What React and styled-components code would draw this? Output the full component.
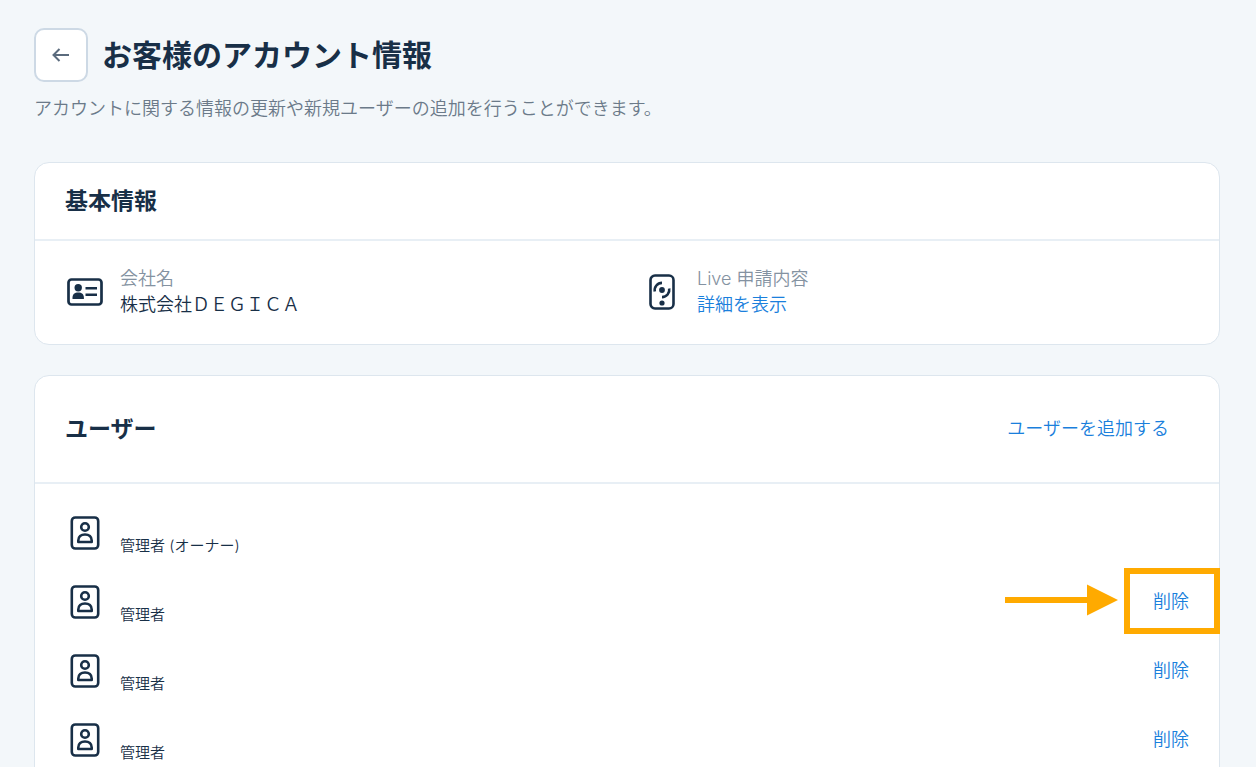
import React from 'react'
import styled, { createGlobalStyle } from 'styled-components';

const GlobalStyle = createGlobalStyle`
  * {
    box-sizing: border-box;
  }
  body {
    margin: 0;
    background-color: #f3f7fa;
    color: #182f47;
    font-family: Inter, "Noto Sans CJK JP", sans-serif;
    font-size: 18px;
    font-weight: 350;
    line-height: 26px;
  }
`;
const Page = styled.main`
  height: 100vh;
  overflow: hidden;
  padding: 28px 36px 0 34px;
`;
const TitleBar = styled.header`
  display: flex;
  align-items: center;
  gap: 14px;
`;
const BackButton = styled.button`
  display: flex;
  align-items: center;
  justify-content: center;
  width: 54px;
  height: 54px;
  padding: 0;
  border: 2px solid #cdd9e5;
  border-radius: 10px;
  background-color: white;
  color: #5b6b7d;
  cursor: pointer;
`;
const Title = styled.h1`
  margin: 0;
  font-size: 30px;
  line-height: 40px;
  font-weight: 700;
`;
const Description = styled.p`
  margin: 14px 0 40px;
  color: #6b7a89;
`;
const Card = styled.section`
  margin-bottom: 30px;
  border: 1px solid #dde6ee;
  border-radius: 15px;
  background-color: white;
`;
const CardHeader = styled.div`
  display: flex;
  align-items: center;
  justify-content: space-between;
  padding: ${props => props.$tall ? '40px 50px 40px 30px' : '25px 30px'};
  border-bottom: 2px solid #e8eff5;
`;
const CardTitle = styled.h2`
  margin: 0;
  font-size: 23px;
  line-height: 26px;
  font-weight: 700;
`;
const InfoGrid = styled.div`
  display: grid;
  grid-template-columns: 1fr 1fr;
  gap: 30px;
  padding: 25px 30px 26px;
`;
const InfoItem = styled.div`
  display: flex;
  align-items: center;
  gap: 15px;
`;
const IconBox = styled.span`
  display: flex;
  align-items: center;
  justify-content: center;
  width: 40px;
  height: 40px;
`;
const Label = styled.div`
  color: #8492a1;
`;
const Value = styled.div`
  color: #182f47;
`;
const TextLink = styled.a`
  color: #1a7fdc;
  text-decoration: none;
`;
const UserList = styled.ul`
  margin: 0;
  padding: 14px 30px;
  list-style: none;
`;
const UserRow = styled.li`
  position: relative;
  display: flex;
  align-items: center;
  gap: 15px;
  height: 69px;
`;
const UserText = styled.div`
  flex: 1;
`;
const UserName = styled.div`
  height: 26px;
`;
const UserRole = styled.div`
  font-size: 15px;
  line-height: 22px;
`;
const DeleteButton = styled.button`
  padding: 0;
  border: 0;
  background: none;
  color: #1a7fdc;
  font: inherit;
  cursor: pointer;
`;
const Highlight = styled.span`
  position: absolute;
  top: 1px;
  right: -31px;
  width: 96px;
  height: 66px;
  border: 6px solid #ffaa00;
  pointer-events: none;
`;
const Pointer = styled.svg`
  position: absolute;
  top: 17px;
  right: 71px;
  pointer-events: none;
`;

const ArrowLeft = () => (
  <svg width="18" height="14" viewBox="0 0 18 14" fill="none" stroke="currentColor" strokeWidth="2" aria-hidden="true">
    <path d="M17 7H2M7.5 1L1.5 7l6 6" />
  </svg>
)

const IdCardIcon = () => (
  <svg width="36" height="28" viewBox="0 0 36 28" fill="#182f47" aria-hidden="true">
    <rect x="1.5" y="1.5" width="33" height="25" rx="3" fill="none" stroke="#182f47" strokeWidth="2.7" />
    <circle cx="11.2" cy="9.8" r="3.7" />
    <path d="M5.500 21v-1.300c0-3.500 2.100-5.200 5.700-5.200s5.700 1.700 5.700 5.200V21z" />
    <path d="M18.500 9h11.500v2.600H18.500zM18.500 15.500h11.500v2.600H18.500z" />
  </svg>
)

const LiveIcon = () => (
  <svg width="26" height="36" viewBox="0 0 26 36" fill="none" stroke="#182f47" strokeWidth="2.600" aria-hidden="true">
    <rect x="1.500" y="1.500" width="23" height="33" rx="4.500" />
    <circle cx="13" cy="16" r="2.900" fill="#182f47" stroke="none" />
    <circle cx="13" cy="29" r="2.600" fill="#182f47" stroke="none" />
    <path d="M5.800 17.500a7.300 7.300 0 0 1 7.200-8.600M20.200 14.500a7.300 7.300 0 0 1-7.200 8.600" />
  </svg>
)

const UserIcon = () => (
  <svg width="30" height="34" viewBox="0 0 30 34" fill="none" stroke="#182f47" strokeWidth="2.600" aria-hidden="true">
    <rect x="1.800" y="1.500" width="26.400" height="31" rx="3.500" />
    <circle cx="15" cy="11" r="3.800" />
    <path d="M8.300 26v-1.500c0-3.800 2.700-6 6.700-6s6.700 2.200 6.700 6V26z" strokeLinejoin="round" />
  </svg>
)

const users = [
  { id: 1, role: '管理者 (オーナー)', owner: true },
  { id: 2, role: '管理者', highlighted: true },
  { id: 3, role: '管理者' },
  { id: 4, role: '管理者' },
]

const User = ({user}) => {
  return (
    <UserRow>
      <IconBox><UserIcon /></IconBox>
      <UserText>
        <UserName />
        <UserRole>{user.role}</UserRole>
      </UserText>
      {!user.owner && <DeleteButton type="button">削除</DeleteButton>}
      {user.highlighted && (
        <>
          <Pointer width="113" height="32" viewBox="0 0 113 32" fill="#ffaa00" aria-hidden="true">
            <path d="M0 13h82V0.500L113 16L82 31.500V19H0z" />
          </Pointer>
          <Highlight />
        </>
      )}
    </UserRow>
  )
}

export default function App() {
  return (
    <>
      <GlobalStyle />
      <Page>
        <TitleBar>
          <BackButton type="button" aria-labelledby="page-title"><ArrowLeft /></BackButton>
          <Title id="page-title">お客様のアカウント情報</Title>
        </TitleBar>
        <Description>アカウントに関する情報の更新や新規ユーザーの追加を行うことができます。</Description>

        <Card>
          <CardHeader>
            <CardTitle>基本情報</CardTitle>
          </CardHeader>
          <InfoGrid>
            <InfoItem>
              <IconBox><IdCardIcon /></IconBox>
              <div>
                <Label>会社名</Label>
                <Value>株式会社ＤＥＧＩＣＡ</Value>
              </div>
            </InfoItem>
            <InfoItem>
              <IconBox><LiveIcon /></IconBox>
              <div>
                <Label>Live 申請内容</Label>
                <TextLink href="#live">詳細を表示</TextLink>
              </div>
            </InfoItem>
          </InfoGrid>
        </Card>

        <Card>
          <CardHeader $tall>
            <CardTitle>ユーザー</CardTitle>
            <TextLink href="#add-user">ユーザーを追加する</TextLink>
          </CardHeader>
          <UserList>
            {users.map(user => <User key={user.id} user={user} />)}
          </UserList>
        </Card>
      </Page>
    </>
  )
}
